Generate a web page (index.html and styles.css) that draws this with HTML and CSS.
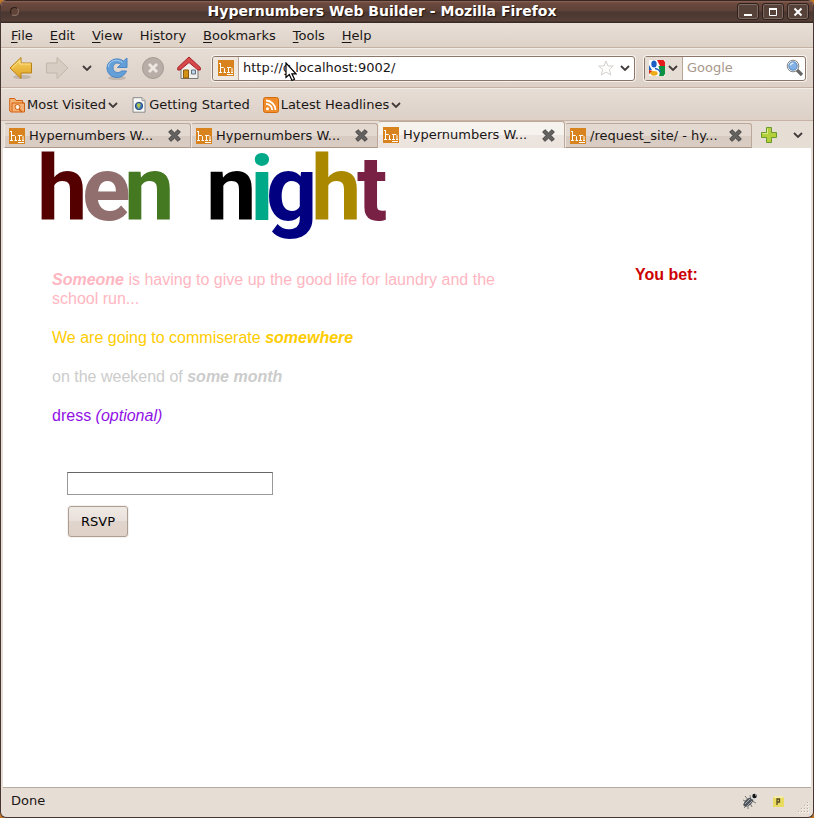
FILE: index.html
```html
<!DOCTYPE html>
<html lang="en">
<head>
<meta charset="utf-8">
<title>Hypernumbers Web Builder - Mozilla Firefox</title>
<link rel="stylesheet" href="styles.css">
</head>
<body>
<svg class="defs" aria-hidden="true">
  <symbol id="chevron" viewBox="0 0 10 6"><path d="M1 1l4 4 4-4" fill="none" stroke="#403a38" stroke-width="1.8"/></symbol>
  <symbol id="close" viewBox="0 0 13 13"><path d="M3 .7l3.500 3.200L10 .7 12.300 3 9 6.500l3.300 3.500L10 12.300 6.500 9.100 3 12.300.7 10 4 6.500.7 3z" fill="#656362" stroke="#403f3e"/></symbol>
  <symbol id="hn" viewBox="0 0 16 16"><path fill="#d9831f" d="M0 0h16v16H0z"/><path d="M1 3.500h2M2.500 3.500v9M1 12.500h3M3 7.500h2.500l1 1v4M5.500 12.500H8M9 7.500h1.500v5M9 12.500h3M10.500 7.500h2.500l1 1v4M13 12.500h2M9 14.500h6" fill="none" stroke="#fff"/></symbol>
</svg>
<div class="window">
  <header class="titlebar">
    <span class="orb"></span>
    <h1 class="title">Hypernumbers Web Builder - Mozilla Firefox</h1>
    <div class="controls">
      <button class="control" aria-label="Minimize"><svg width="10" height="10"><path d="M1 8h8" stroke="#fff" stroke-width="2"/></svg></button>
      <button class="control" aria-label="Maximize"><svg width="10" height="10"><path d="M1.500 2h7v6.500h-7z" fill="none" stroke="#fff"/><path d="M1 2h8" stroke="#fff" stroke-width="2"/></svg></button>
      <button class="control" aria-label="Close"><svg width="10" height="10"><path d="M1.500 1.500l7 7M8.500 1.500l-7 7" stroke="#fff" stroke-width="2"/></svg></button>
    </div>
  </header>
  <nav class="menubar">
    <a href="#"><u>F</u>ile</a><a href="#"><u>E</u>dit</a><a href="#"><u>V</u>iew</a><a href="#">Hi<u>s</u>tory</a><a href="#"><u>B</u>ookmarks</a><a href="#"><u>T</u>ools</a><a href="#"><u>H</u>elp</a>
  </nav>
  <div class="toolbar">
    <div class="navbuttons">
      <button aria-label="Back"><svg width="24" height="24" viewBox="0 0 24 24"><ellipse cx="13" cy="21" rx="9" ry="2" fill="#a5998f" opacity=".5"/><path d="M1 12L12 1.500V7h10.500v10H12v5.500z" fill="url(#gold)" stroke="#b9831a"/><path d="M3 12l8-7.500V8h10.500" fill="none" stroke="#fbe089"/><defs><linearGradient id="gold" x2="0" y2="1"><stop stop-color="#f8d568"/><stop offset="1" stop-color="#e0a01f"/></linearGradient></defs></svg></button>
      <button aria-label="Forward"><svg width="24" height="24" viewBox="0 0 24 24"><path d="M23 12L12 1.500V7H1.500v10H12v5.500z" fill="#d8cdc3" stroke="#c3b7ac"/></svg></button>
      <button class="history" aria-label="Recent pages"><svg width="10" height="6"><use href="#chevron"/></svg></button>
      <button aria-label="Reload"><svg width="24" height="24" viewBox="0 0 24 24"><ellipse cx="12" cy="22" rx="9" ry="2" fill="#a5998f" opacity=".5"/><path d="M22 2v9.500h-9.500l3.200-3.200C12 5.500 8 8 8 12c0 4.500 5.500 6 8.500 3h5C19.500 19.500 16 21.500 12 21.500 6.500 21.500 2 17.500 2 12 2 4.500 11.500 0 18.500 5z" fill="#659fd8" stroke="#4b87c4"/><path d="M3.500 11c0-6 8-9 14-4.500" fill="none" stroke="#a7cdf0"/></svg></button>
      <button aria-label="Stop"><svg width="24" height="24" viewBox="0 0 24 24"><circle cx="12" cy="12" r="10.500" fill="#b9aea7" stroke="#a69a93"/><path d="M8 8l8 8M16 8l-8 8" stroke="#eee7e1" stroke-width="2.800"/></svg></button>
      <button aria-label="Home"><svg width="24" height="24" viewBox="0 0 24 24"><path d="M4 12v10.500h17V12l-8.500-8z" fill="#f1efec" stroke="#777"/><path d="M12 1L.8 11.500V14H3l9-7.500 9 7.500h2.300v-2.500z" fill="#d8494c" stroke="#a12125"/><path d="M6.500 14h5v8h-5z" fill="#d39118" stroke="#8b5c0c"/><path d="M14.500 14h4v4h-4z" fill="#bcd3ed" stroke="#68727f"/></svg></button>
    </div>
    <div class="field address">
      <span class="favicon"><svg width="16" height="16"><use href="#hn"/></svg></span>
      <input type="text" aria-label="Location" value="http://g.localhost:9002/">
      <svg class="star" width="16" height="16" viewBox="0 0 16 16"><path d="M8 1l2 5h5.300l-4 3.500 1.500 5.500L8 12l-4.800 3 1.500-5.500-4-3.500H6z" fill="#fff" stroke="#d2cfcc"/></svg>
      <button aria-label="Show history"><svg width="10" height="6"><use href="#chevron"/></svg></button>
      <svg class="pointer" width="12" height="20" viewBox="0 0 12 20"><path d="M1 1v14.500l3.300-3 2.700 6 2.500-1.200-2.600-5.500H11z" fill="#fff" stroke="#000" stroke-width="1.200"/></svg>
    </div>
    <div class="field search">
      <button class="engine" aria-label="Search engine"><svg width="16" height="16" viewBox="0 0 16 16"><path fill="#fff" d="M0 0h16v16H0z"/><path fill="#e61c1c" d="M8 0h6.500L16 2v4h-5z"/><path fill="#0b9141" d="M9.500 6H16v8l-1.500 2H10l1-4z"/><path fill="#1d5fc0" d="M0 5l3 5H0z"/><path fill="#d7281c" d="M0 10l4 1-4 3z"/><ellipse cx="5" cy="4" rx="2.700" ry="3.500" fill="#1b5fc4"/><path d="M6 8.500c4 1 5 2 5 4" fill="none" stroke="#1b5fc4" stroke-width="1.500"/><ellipse cx="5" cy="13.300" rx="3.600" ry="2.400" fill="#eeab19"/></svg><svg width="10" height="6"><use href="#chevron"/></svg></button>
      <input type="text" aria-label="Search" placeholder="Google">
      <button aria-label="Go"><svg width="18" height="18" viewBox="0 0 18 18"><path d="M11 11l5 5" stroke="#666" stroke-width="3.200"/><circle cx="7" cy="7" r="5.800" fill="#f3f6fa" stroke="#858585"/><circle cx="7" cy="7" r="4.200" fill="#82b1e5" stroke="#5589c2"/><path d="M4.500 6.500c0-1.500 1.500-2.500 3-2.300" fill="none" stroke="#dceafa" stroke-width="1.500"/></svg></button>
    </div>
  </div>
  <nav class="bookmarks">
    <a href="#"><svg width="16" height="16" viewBox="0 0 16 16"><path d="M.7 14V1.500h5L7 3.500h6.500V6h2v9H2z" fill="#f4b276" stroke="#d2600f"/><path d="M3 14.500V6h12" fill="none" stroke="#d2600f"/><circle cx="8.500" cy="10" r="2.500" fill="#fff1df" stroke="#d2600f"/><path d="M10 12l3 3" stroke="#d2600f" stroke-width="1.500"/></svg>Most Visited<svg width="10" height="6"><use href="#chevron"/></svg></a>
    <a href="#"><svg width="16" height="16" viewBox="0 0 16 16"><path d="M2 .7h9l3 3v11.500H2z" fill="#f8f8f7" stroke="#888"/><path d="M11 .7v3h3" fill="#ddd" stroke="#999"/><circle cx="8" cy="9" r="3.700" fill="#4276b5" stroke="#254c82"/><path d="M6 7l2-1 2 2-1 1-1 3-2-3z" fill="#b2c84a"/></svg>Getting Started</a>
    <a href="#"><svg width="16" height="16" viewBox="0 0 16 16"><rect x=".5" y=".5" width="15" height="15" rx="2" fill="#f08c2a" stroke="#d36b0c"/><circle cx="4.500" cy="11.700" r="1.500" fill="#fff"/><path d="M3 6.800c3.500 0 6.200 2.700 6.200 6.200M3 3.500c5.200 0 9.500 4.300 9.500 9.500" fill="none" stroke="#fff" stroke-width="1.800"/></svg>Latest Headlines<svg width="10" height="6"><use href="#chevron"/></svg></a>
  </nav>
  <div class="tabs">
    <div class="tab"><svg width="16" height="16"><use href="#hn"/></svg><span>Hypernumbers W...</span><button aria-label="Close tab"><svg width="13" height="13"><use href="#close"/></svg></button></div>
    <div class="tab"><svg width="16" height="16"><use href="#hn"/></svg><span>Hypernumbers W...</span><button aria-label="Close tab"><svg width="13" height="13"><use href="#close"/></svg></button></div>
    <div class="tab active"><svg width="16" height="16"><use href="#hn"/></svg><span>Hypernumbers W...</span><button aria-label="Close tab"><svg width="13" height="13"><use href="#close"/></svg></button></div>
    <div class="tab"><svg width="16" height="16"><use href="#hn"/></svg><span>/request_site/ - hy...</span><button aria-label="Close tab"><svg width="13" height="13"><use href="#close"/></svg></button></div>
    <div class="tabtools">
      <button aria-label="New tab"><svg width="16" height="16" viewBox="0 0 16 16"><path d="M5.500.5h5v5h5v5h-5v5h-5v-5h-5v-5h5z" fill="#b3cf3c" stroke="#6b9a2c"/><path d="M6.500 6.500v-5M1.500 6.500h5" stroke="#dcea88" fill="none"/></svg></button>
      <button aria-label="List tabs"><svg width="10" height="6"><use href="#chevron"/></svg></button>
    </div>
  </div>
  <main class="page">
    <svg class="logo" width="360" height="96" viewBox="0 0 360 96" role="img" aria-label="hen night">
      <text y="72"><tspan x="2" fill="#550000">h</tspan><tspan x="47" fill="#916f6f">e</tspan><tspan x="89" fill="#447821">n</tspan><tspan x="171" fill="#000">n</tspan><tspan x="215" fill="#00aa88">i</tspan><tspan x="231" fill="#000080">g</tspan><tspan x="276" fill="#aa8800">h</tspan><tspan x="322" fill="#782144">t</tspan></text>
    </svg>
    <div class="columns">
      <div class="invite">
        <p class="who"><b><i>Someone</i></b> is having to give up the good life for laundry and the school run...</p>
        <p class="where">We are going to commiserate <b><i>somewhere</i></b></p>
        <p class="when">on the weekend of <b><i>some month</i></b></p>
        <p class="dress">dress <i>(optional)</i></p>
        <form class="rsvp">
          <input type="text" aria-label="Your name">
          <button type="button">RSVP</button>
        </form>
      </div>
      <h2 class="replies">You bet:</h2>
    </div>
  </main>
  <footer class="status">
    <span>Done</span>
    <svg width="16" height="16" viewBox="0 0 16 16"><path d="M1 7l4 2M1 12l4-2M6 16l0-5M3 3l4 5M8 2l1 5M10 14l-2-4M14 10l-4-2M2 15l3-3" stroke="#777" fill="none"/><ellipse cx="6.500" cy="9" rx="6" ry="3.200" transform="rotate(-42 6.500 9)" fill="#50555b"/><path d="M3 11l5-5M5 13l5-5" stroke="#aab0b5"/><circle cx="12" cy="3.500" r="3.300" fill="#ddd"/><circle cx="12.500" cy="3" r="2.200" fill="#111"/><path d="M13 2h1" stroke="#fff"/></svg>
    <svg width="11" height="11" viewBox="0 0 11 11"><path fill="#eadb62" d="M0 1h11v10H0z"/><path fill="#f6ecaa" d="M1 0h9v2H1z"/><path d="M4 9V3h2.500v3H4" fill="none" stroke="#554d20" stroke-width="1.300"/></svg>
    <svg class="grip" width="12" height="12" viewBox="0 0 12 12"><path d="M9 1h2M6 4h2M9 4h2M3 7h2M6 7h2M9 7h2M0 10h2M3 10h2M6 10h2M9 10h2" stroke="#f4efea" stroke-width="2"/><path d="M9 .5h1M6 3.500h1M9 3.500h1M3 6.500h1M6 6.500h1M9 6.500h1M0 9.500h1M3 9.500h1M6 9.500h1M9 9.500h1" stroke="#b8aaa0"/></svg>
  </footer>
</div>
</body>
</html>
```
FILE: styles.css
```css
* { box-sizing: border-box; }
body { margin: 0; background: #c67725; font: 13px/16px "DejaVu Sans", sans-serif; color: #1a1615; }
button { border: 0; padding: 0; background: none; font: inherit; color: inherit; display: flex; align-items: center; justify-content: center; }
input { min-width: 0; border: 0; padding: 0; font: inherit; color: inherit; outline: 0; background: none; }
a { color: inherit; text-decoration: none; }
svg { display: block; flex: none; }
.defs { position: absolute; width: 0; height: 0; }
.window { min-height: 100vh; display: flex; flex-direction: column; background: #e6ddd4; border: 1px solid #453632; border-top: 0; border-radius: 6px; overflow: hidden; }

.titlebar { height: 23px; display: grid; grid-template-columns: 28px 1fr 78px; align-items: center; background: linear-gradient(#3a2620 0, #3a2620 1px, #8b6559 1px, #6d493e 3px, #5d4238 11px, #4a3731 12px, #553f37 21px, #3a2a26 22px); }
.orb { width: 9px; height: 9px; margin-left: 9px; border: 1px solid #8f7469; border-top-color: #2b1c18; border-left-color: #2b1c18; border-radius: 50%; background: #604438; }
.title { margin: 0; padding-bottom: 2px; text-align: center; font-size: 14px; line-height: 16px; color: #fff; text-shadow: 1px 1px 1px #1c100c; white-space: nowrap; }
.controls { display: flex; justify-content: flex-end; gap: 3px; padding-right: 4px; }
.control { width: 22px; height: 17px; border: 1px solid #2e211d; border-radius: 3px; background: #57423a; box-shadow: inset 0 0 0 1px #806a61; }

.menubar { height: 25px; display: flex; align-items: center; gap: 17px; padding: 1px 10px 0; background: linear-gradient(#e8dfd6, #ddd2c8); border-bottom: 1px solid #c5b2a4; }
.menubar u { text-underline-offset: 2px; }

.toolbar { height: 40px; display: flex; align-items: center; gap: 8px; padding: 0 7px 0 8px; background: linear-gradient(#e6ddd4, #dcd0c7); border-top: 1px solid #f2ece6; border-bottom: 1px solid #c5b2a4; }
.navbuttons { display: flex; gap: 12px; }
.navbuttons .history { width: 12px; }
.field { position: relative; height: 25px; display: flex; align-items: center; background: #fff; border: 1px solid #8b7669; border-radius: 3px; box-shadow: 0 0 0 1px #f6f2ee; }
.address { flex: 1; margin-left: 3px; gap: 6px; padding-right: 4px; }
.address input { flex: 1; }
.favicon { width: 26px; align-self: stretch; display: flex; align-items: center; justify-content: center; background: #efe8e1; border-right: 1px solid #b9a698; border-radius: 3px 0 0 3px; margin-right: -2px; }
.pointer { position: absolute; left: 72px; top: 5px; }
.search { width: 162px; padding-right: 1px; margin-left: 1px; }
.search input { flex: 1; padding-left: 4px; }
.search input::placeholder { color: #a8978b; opacity: 1; }
.engine { width: 38px; align-self: stretch; gap: 3px; background: #e6ddd4; border-right: 1px solid #b9a698; }

.bookmarks { height: 33px; display: flex; align-items: center; gap: 13px; padding: 0 8px; background: linear-gradient(#e6ddd4, #dcd0c7); border-top: 1px solid #f2ece6; border-bottom: 1px solid #c5b2a4; }
.bookmarks a { display: flex; align-items: center; gap: 2px; }

.tabs { height: 27px; display: flex; align-items: flex-end; padding: 0 10px 0 3px; background: #e6ddd4; }
.tab { flex: 0 1 187px; height: 25px; display: flex; align-items: center; gap: 4px; padding: 0 9px 0 4px; white-space: nowrap; background: linear-gradient(#e3d9d0 50%, #d7cac0 50%, #d9cdc4); border: 1px solid #bba89a; border-left-color: #f0e9e3; border-bottom-color: #ae9786; border-radius: 3px 3px 0 0; }
.tab span { flex: 1; }
.tab.active { height: 27px; background: linear-gradient(#f6f2ee 50%, #ede6e0 50%, #ebe3dc); border-bottom: 0; }
.tabtools { flex: 1; height: 27px; display: flex; align-items: center; justify-content: space-between; padding-left: 9px; }

.page { flex: 1; margin: 0 2px; background: #fff; border-bottom: 1px solid #b6a9a0; font: 16px/19px "Liberation Sans", sans-serif; }
.logo { margin-left: 32px; font: bold 90px Roboto, sans-serif; overflow: visible; }
.columns { display: grid; grid-template-columns: 458px 1fr; gap: 125px; padding: 21px 16px 0 49px; }
.invite p { margin: 0 0 20px; }
.invite .who { margin-top: 5px; color: #ffb6c1; }
.where { color: #fc0; }
.when { color: #ccc; }
.dress { color: #9010e6; }
.replies { margin: 0; font-size: 16px; line-height: 19px; color: #c00; }
.rsvp { margin: 47px 0 0 15px; display: flex; flex-direction: column; align-items: flex-start; gap: 11px; }
.rsvp input { width: 206px; height: 23px; border: 1px solid #999; border-top-color: #666; padding: 0 4px; }
.rsvp button { height: 31px; margin-left: 1px; padding: 0 12px; border: 1px solid #ad9e94; border-radius: 3px; background: linear-gradient(#f0eae5, #e8dfd9 50%, #e0d5cd 50%, #dfd1c7); box-shadow: 0 0 0 1px #f5f1ee; font: 13px/16px "DejaVu Sans", sans-serif; color: #000; }

.status { position: relative; height: 29px; display: flex; align-items: center; gap: 15px; padding: 0 29px 3px 10px; }
.status span { flex: 1; }
.grip { position: absolute; right: 3px; bottom: 3px; }
```
